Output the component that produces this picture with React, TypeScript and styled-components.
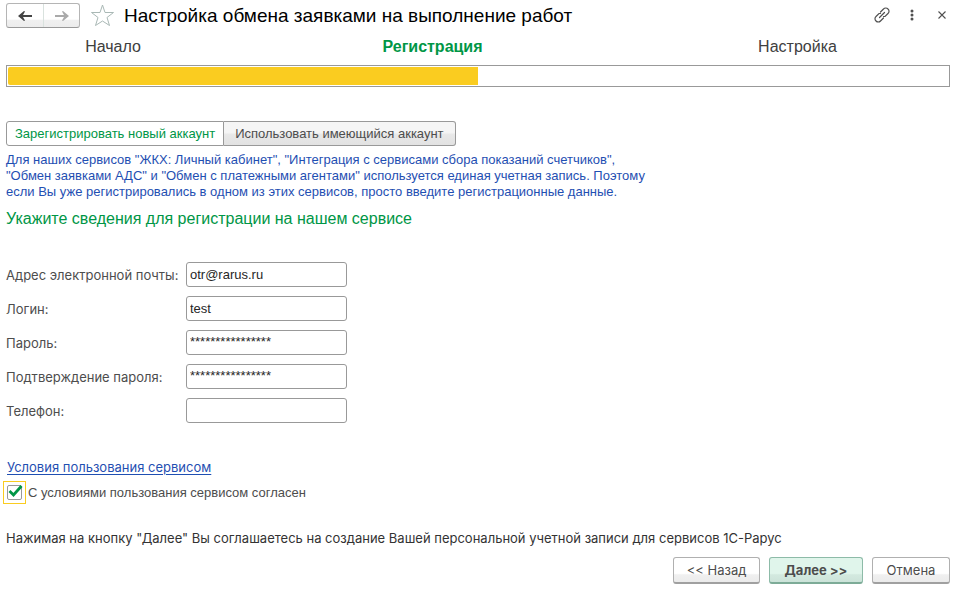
import React, { useState } from "react";
import styled, { createGlobalStyle, css } from "styled-components";

const GlobalStyle = createGlobalStyle`
  * { box-sizing: border-box; }
  body {
    margin: 0;
    background: #fff;
    color: #4d4d4d;
    font-family: "Liberation Sans", Arial, sans-serif;
    font-size: 13px;
    line-height: 16px;
  }
  button, input { font: inherit; color: inherit; }
`;

const formFont = css`
  font-family: Inter, "Liberation Sans", sans-serif;
  font-size: 13px;
`;

const Window = styled.main`
  display: flex;
  flex-direction: column;
  padding: 3px 12px 9px 6px;
`;

const Header = styled.header`
  display: flex;
  align-items: center;
  height: 25px;
`;

const History = styled.div`
  display: flex;
  height: 25px;
  border: 1px solid #b5b5b5;
  border-bottom-color: #999;
  border-radius: 3px;
  background: linear-gradient(#fff 0 66%, #f0f0f0 70%, #ececec);
`;

const HistoryButton = styled.button`
  display: flex;
  align-items: center;
  justify-content: center;
  width: 36px;
  padding: 0;
  border: 0;
  background: none;
  color: #444;
  & + & { border-left: 1px solid #d9e2de; }
  &:disabled { color: #aaa; }
`;

const IconButton = styled.button`
  display: flex;
  align-items: center;
  justify-content: center;
  width: 24px;
  height: 24px;
  padding: 0;
  border: 0;
  background: none;
  color: #505050;
`;

const Favorite = styled(IconButton)`
  margin: 0 10px;
  color: #a9b8b5;
`;

const Title = styled.h1`
  flex: 1;
  margin: 0;
  color: #000;
  font-size: 19px;
  font-weight: 400;
  line-height: 24px;
`;

const Tools = styled.div`
  display: flex;
  align-self: flex-start;
  gap: 6px;
  margin-right: -4px;
`;

const Steps = styled.ol`
  display: grid;
  grid-template-columns: 214fr 425fr 305fr;
  margin: 9px 0 8px;
  padding: 0;
  list-style: none;
  text-align: center;
  font-size: 16px;
  line-height: 20px;
`;

const Step = styled.li<{ $current?: boolean }>`
  color: ${(p) => (p.$current ? "#009646" : "#404040")};
  font-weight: ${(p) => (p.$current ? 700 : 400)};
`;

const Progress = styled.div`
  height: 22px;
  padding: 1px;
  border: 1px solid #999;
`;

const ProgressFill = styled.div`
  height: 100%;
  border-radius: 2px 0 0 2px;
  background: #facc20;
`;

const Tabs = styled.div`
  display: flex;
  margin: 34px 0 6px;
`;

const Tab = styled.button<{ $active: boolean }>`
  height: 25px;
  padding: 0 11px;
  border: 1px solid #999;
  white-space: nowrap;
  &:first-child { border-radius: 3px 0 0 3px; padding: 0 8px; }
  &:last-child { border-radius: 0 3px 3px 0; border-left: 0; }
  ${(p) =>
    p.$active
      ? css`
          background: #fff;
          color: #009646;
        `
      : css`
          background: linear-gradient(#f5f5f5 0 45%, #e8e8e8 55%, #e2e2e2);
          color: #4d4d4d;
        `}
`;

const Note = styled.p`
  max-width: 660px;
  margin: 0;
  color: #1f4fb2;
`;

const Heading = styled.h2`
  margin: 8px 0 32px;
  color: #009646;
  font-size: 16px;
  font-weight: 400;
  line-height: 22px;
`;

const Form = styled.form`
  display: grid;
  gap: 9px;
`;

const Field = styled.div`
  display: grid;
  grid-template-columns: 180px 161px;
  align-items: center;
  white-space: nowrap;
  ${formFont}
`;

const TextInput = styled.input`
  width: 100%;
  height: 25px;
  padding: 0 3px;
  border: 1px solid #999;
  border-radius: 3px;
  background: #fff;
  color: #262626;
  font-family: "Liberation Sans", Arial, sans-serif;
  font-size: 13px;
  &[data-masked] { padding-bottom: 3px; }
`;

const Terms = styled.a`
  align-self: flex-start;
  margin: 36px 0 6px 1px;
  color: #1f4fb2;
  text-underline-offset: 2px;
  ${formFont}
`;

const Agreement = styled.label`
  display: flex;
  align-items: center;
  gap: 2px;
  margin-left: -3px;
`;

const CheckFrame = styled.span`
  display: grid;
  place-items: center;
  width: 23px;
  height: 23px;
  border: 1px solid #facc20;
  svg { grid-area: 1 / 1; pointer-events: none; }
`;

const Check = styled.input`
  grid-area: 1 / 1;
  appearance: none;
  width: 15px;
  height: 15px;
  margin: 0;
  border: 1px solid #999;
  border-radius: 2px;
  background: #fff;
  &:not(:checked) + svg { visibility: hidden; }
`;

const Consent = styled.p`
  margin: 26px 0 11px;
  color: #333;
  ${formFont}
`;

const Actions = styled.footer`
  display: flex;
  justify-content: flex-end;
  gap: 9px;
`;

const ActionButton = styled.button<{ $primary?: boolean; $width: number }>`
  width: ${(p) => p.$width}px;
  height: 27px;
  padding: 0;
  border: 1px solid #b0b0b0;
  border-bottom: 2px solid #a0a0a0;
  border-radius: 3px;
  background: linear-gradient(#fff 0 64%, #f0f0f0 70%, #ebebeb);
  ${formFont}
  ${(p) =>
    p.$primary &&
    css`
      border-color: #8dbba8;
      border-bottom-color: #7dab97;
      background: linear-gradient(#e0f5eb 0 64%, #d3e9df 70%, #cce3d9);
      font-weight: 700;
    `}
`;

const Arrow = ({ flip = false }: { flip?: boolean }) => (
  <svg width="14" height="12" viewBox="0 0 14 12" fill="currentColor">
    {flip ? (
      <path d="M0 5h9L7 1.500 8 1l6 5-6 5-1-.5L9 7H0Z" />
    ) : (
      <path d="M14 5H5L7 1.500 6 1 0 6l6 5 1-.5L5 7h9Z" />
    )}
  </svg>
);

const fields = [
  { id: "email", label: "Адрес электронной почты:", value: "otr@rarus.ru", masked: false },
  { id: "login", label: "Логин:", value: "test", masked: false },
  { id: "password", label: "Пароль:", value: "****************", masked: true },
  { id: "confirm", label: "Подтверждение пароля:", value: "****************", masked: true },
  { id: "phone", label: "Телефон:", value: "", masked: false },
];

export default function App() {
  const [tab, setTab] = useState(0);
  const progress = 50;

  return (
    <>
      <GlobalStyle />
      <Window>
        <Header>
          <History>
            <HistoryButton aria-label="Вернуться"><Arrow /></HistoryButton>
            <HistoryButton aria-label="Вперёд" disabled><Arrow flip /></HistoryButton>
          </History>
          <Favorite aria-label="В избранное">
            <svg width="24" height="24" viewBox="0 0 24 24" fill="none" stroke="currentColor">
              <path d="M12.500 1 15 8.500H23.500L17 13.500 19.500 21.500 12.500 17 5.500 21.500 8 13.500 1.500 8.500H10Z" />
            </svg>
          </Favorite>
          <Title>Настройка обмена заявками на выполнение работ</Title>
          <Tools>
            <IconButton aria-label="Ссылка">
              <svg width="16" height="16" viewBox="0 0 16 16" fill="none" stroke="currentColor" strokeWidth="1.200" strokeLinecap="round">
                <path d="M6.500 5 9.500 2a3 3 0 0 1 4.500 0 3 3 0 0 1 0 4.500L11 9.500H9.500M9.500 11l-3 3A3 3 0 0 1 2 14a3 3 0 0 1 0-4.500l3-3h1.500M5.500 10.500l5-5" />
              </svg>
            </IconButton>
            <IconButton aria-label="Ещё">
              <svg width="4" height="12" viewBox="0 0 4 12" fill="currentColor">
                <circle cx="2" cy="2" r="1.500" /><circle cx="2" cy="6" r="1.500" /><circle cx="2" cy="10" r="1.500" />
              </svg>
            </IconButton>
            <IconButton aria-label="Закрыть">
              <svg width="8" height="8" viewBox="0 0 8 8" fill="none" stroke="currentColor" strokeWidth="1.100">
                <path d="m.5.5 7 7m0-7-7 7" />
              </svg>
            </IconButton>
          </Tools>
        </Header>

        <Steps>
          <Step>Начало</Step>
          <Step $current aria-current="step">Регистрация</Step>
          <Step>Настройка</Step>
        </Steps>
        <Progress role="progressbar" aria-valuenow={progress} aria-label="Ход настройки">
          <ProgressFill style={{ width: `${progress}%` }} />
        </Progress>

        <Tabs>
          <Tab $active={tab === 0} onClick={() => setTab(0)}>Зарегистрировать новый аккаунт</Tab>
          <Tab $active={tab === 1} onClick={() => setTab(1)}>Использовать имеющийся аккаунт</Tab>
        </Tabs>
        <Note>
          Для наших сервисов "ЖКХ: Личный кабинет", "Интеграция с сервисами сбора показаний счетчиков",<br />
          "Обмен заявками АДС" и "Обмен с платежными агентами" используется единая учетная запись. Поэтому<br />
          если Вы уже регистрировались в одном из этих сервисов, просто введите регистрационные данные.
        </Note>
        <Heading>Укажите сведения для регистрации на нашем сервисе</Heading>

        <Form>
          {fields.map((f) => (
            <Field key={f.id}>
              <label htmlFor={f.id}>{f.label}</label>
              <TextInput id={f.id} defaultValue={f.value} data-masked={f.masked || undefined} autoComplete="off" />
            </Field>
          ))}
        </Form>

        <Terms href="#terms">Условия пользования сервисом</Terms>
        <Agreement>
          <CheckFrame>
            <Check type="checkbox" defaultChecked />
            <svg width="17" height="17" viewBox="0 0 17 17" fill="none" stroke="#009646" strokeWidth="2.800">
              <path d="m3.500 7 4 4L15.500 2" />
            </svg>
          </CheckFrame>
          С условиями пользования сервисом согласен
        </Agreement>

        <Consent>Нажимая на кнопку "Далее" Вы соглашаетесь на создание Вашей персональной учетной записи для сервисов 1С-Рарус</Consent>
        <Actions>
          <ActionButton $width={87}>&lt;&lt; Назад</ActionButton>
          <ActionButton $width={94} $primary>Далее &gt;&gt;</ActionButton>
          <ActionButton $width={78}>Отмена</ActionButton>
        </Actions>
      </Window>
    </>
  );
}
